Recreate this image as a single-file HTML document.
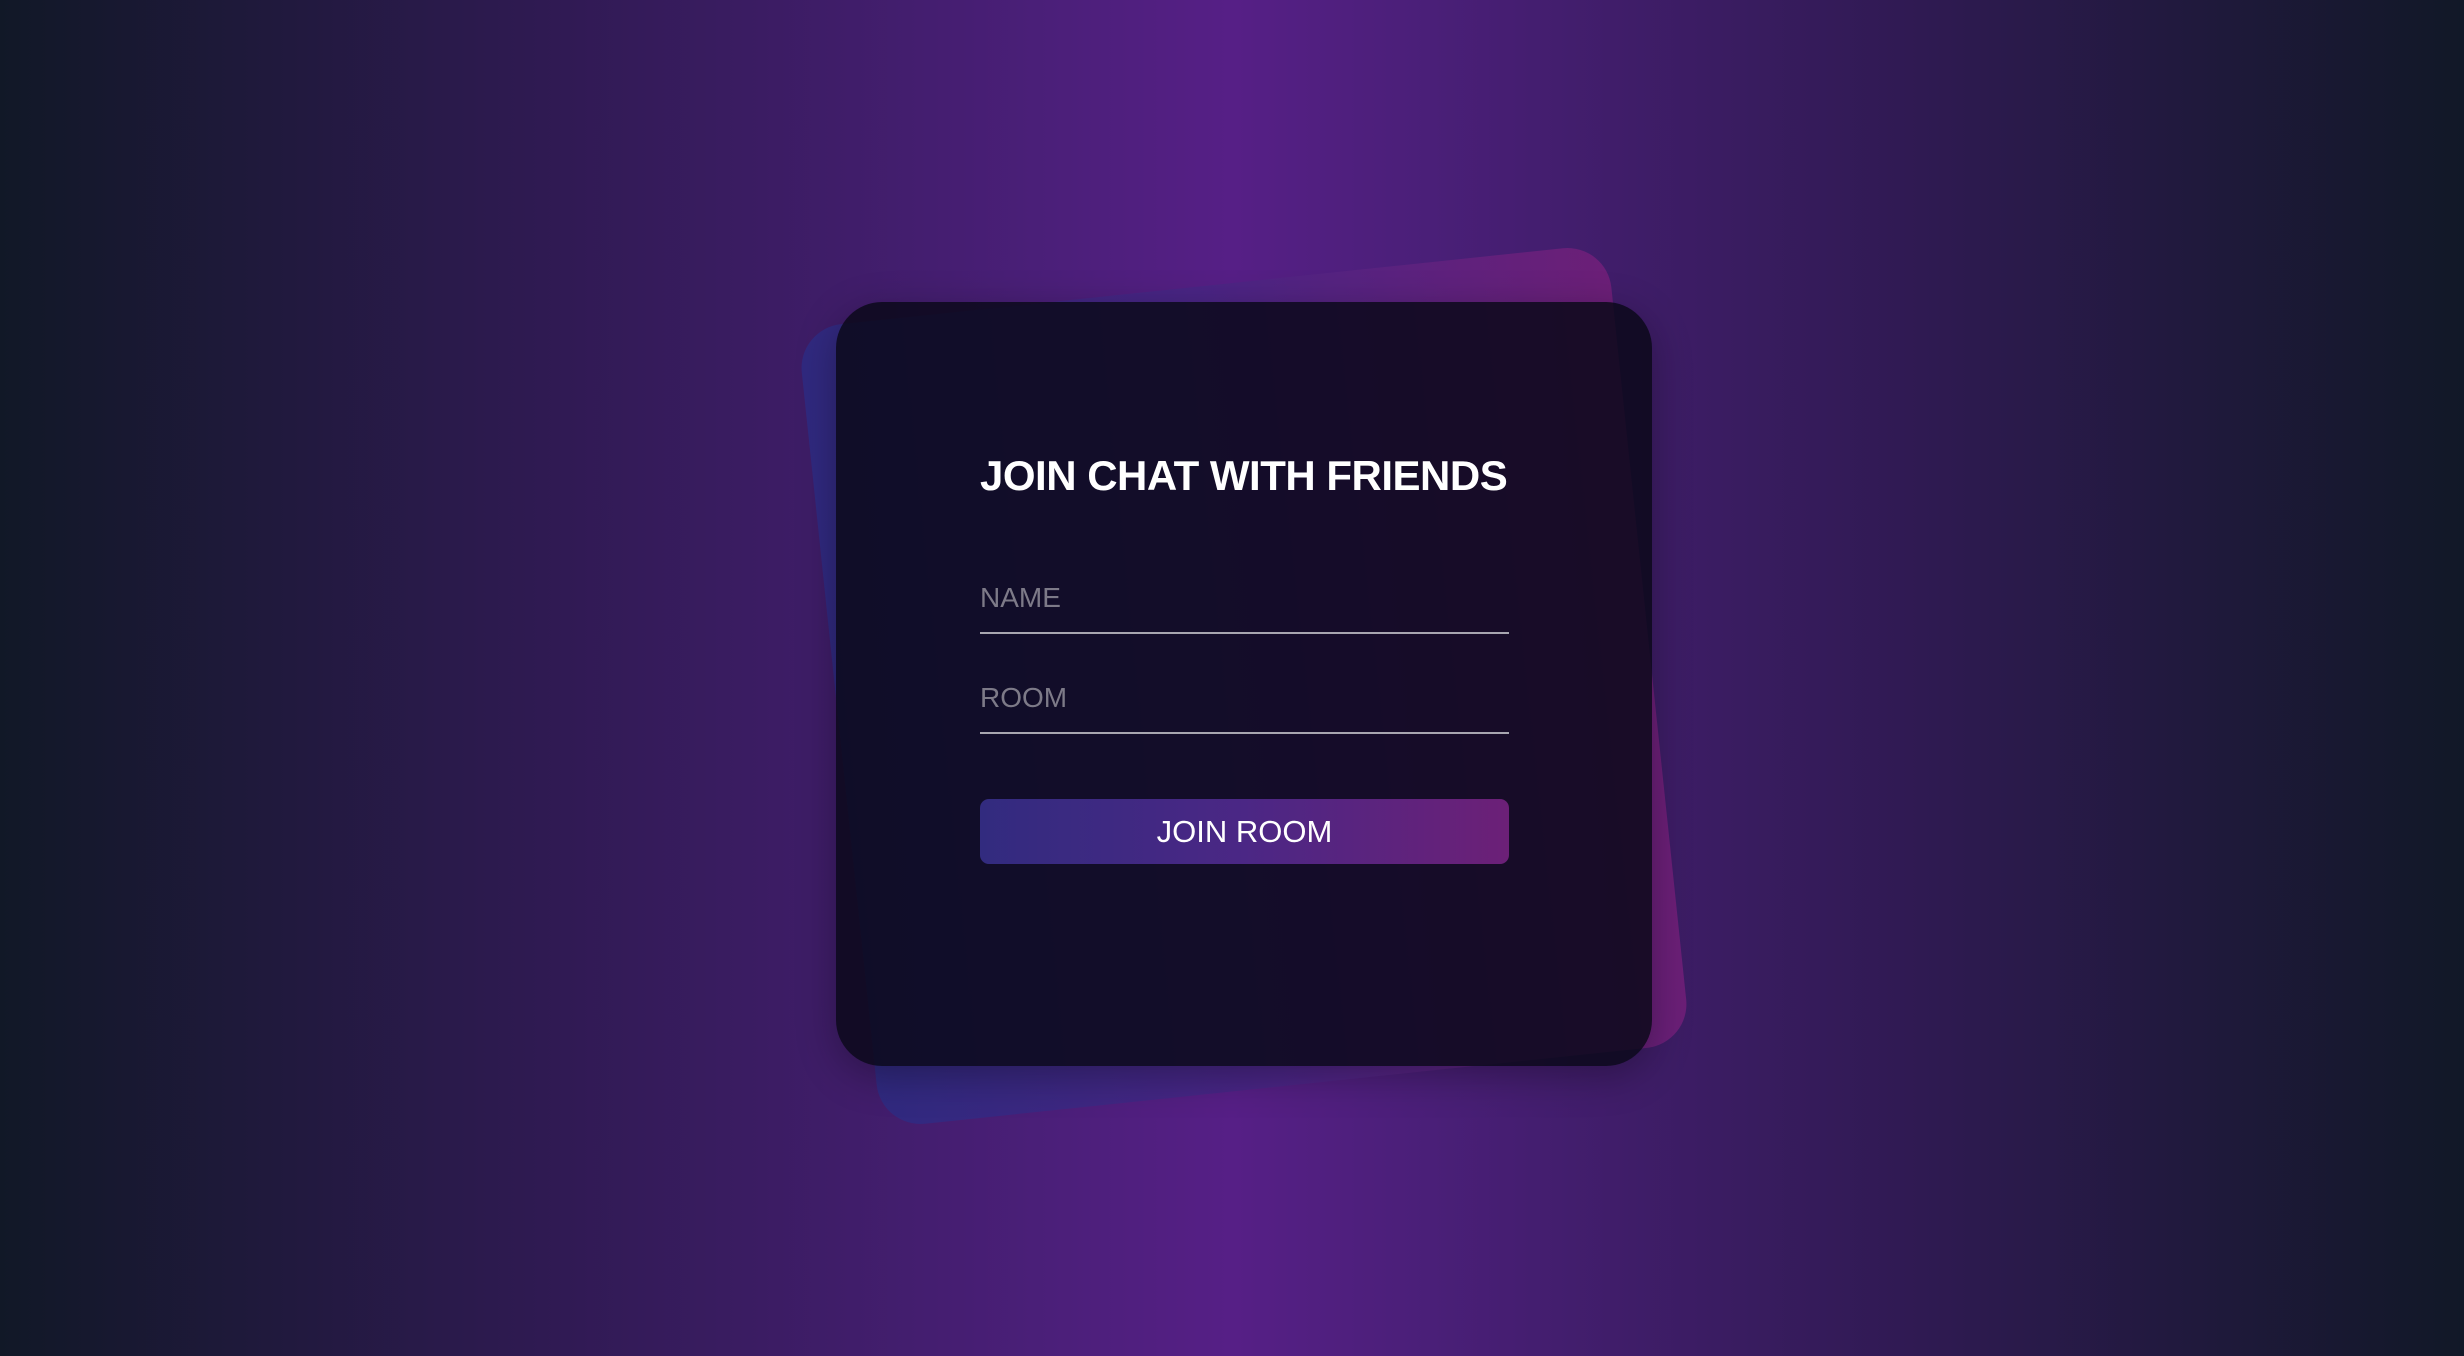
<!DOCTYPE html>
<html><head><meta charset="utf-8"><style>
html,body{margin:0;padding:0;width:2464px;height:1356px;overflow:hidden;font-family:"Liberation Sans",sans-serif}
body{background:linear-gradient(90deg,#111827 0%,#2f1a52 22%,#4a1f78 42%,#561f86 50%,#4a1f78 58%,#2f1a52 78%,#111827 100%)}
.back{position:absolute;left:837px;top:284px;width:814px;height:804px;border-radius:44px;transform:rotate(-6deg);background:linear-gradient(90deg,#2f2a80,#4a2585 50%,#6e1f78);opacity:.95}
.card{position:absolute;left:836px;top:302px;width:816px;height:764px;border-radius:46px;background:rgba(10,8,24,.84);box-shadow:0 10px 40px rgba(0,0,0,.3)}
h1{position:absolute;left:144px;top:150px;margin:0;color:#fff;font-size:42px;font-weight:bold;letter-spacing:-0.5px;white-space:nowrap}
.in{position:absolute;left:144px;width:529px;border-bottom:2px solid #a8a6b0;color:#7d7a88;font-size:28px;height:50px}
.btn{position:absolute;left:144px;top:497px;width:529px;height:65px;border-radius:9px;background:linear-gradient(90deg,#322b7f,#4b2785 50%,#6c2077);color:#fff;font-size:31px;text-align:center;line-height:65px}
</style></head><body>
<div class="back"></div>
<div class="card">
<h1>JOIN CHAT WITH FRIENDS</h1>
<div class="in" style="top:280px">NAME</div>
<div class="in" style="top:380px">ROOM</div>
<div class="btn">JOIN ROOM</div>
</div>
</body></html>
